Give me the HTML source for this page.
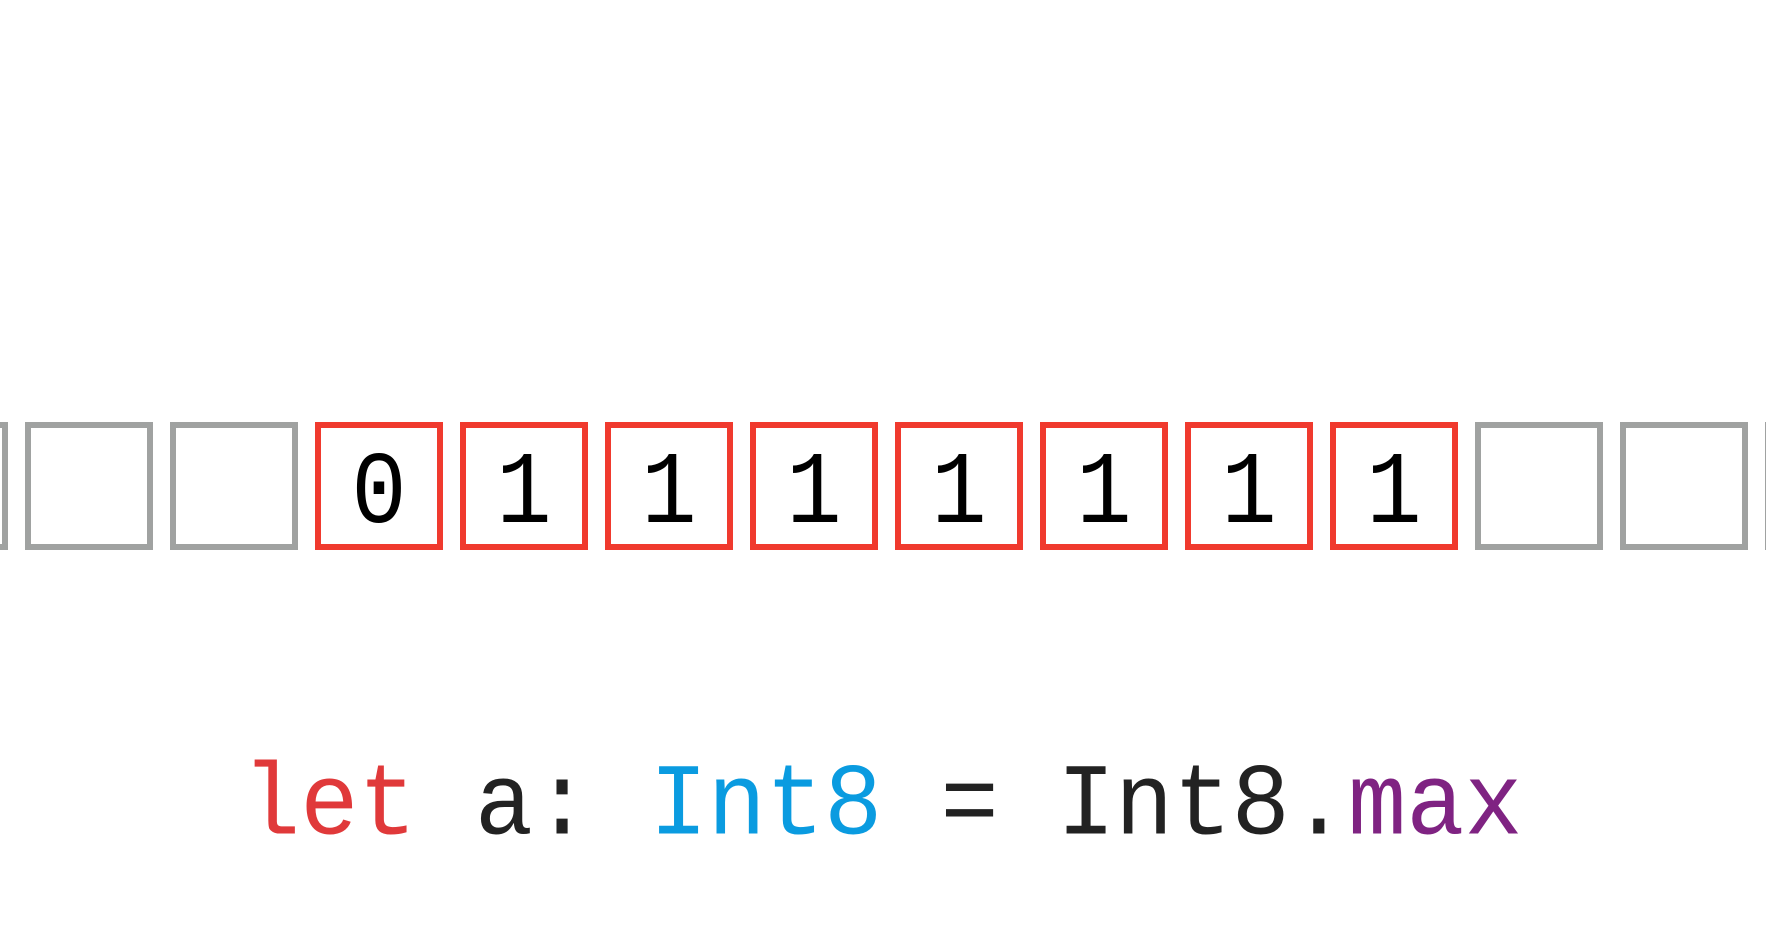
<!DOCTYPE html>
<html><head><style>
html,body{margin:0;padding:0;background:#fff;width:1766px;height:944px;overflow:hidden;position:relative}
.b{position:absolute;top:422px;width:116px;height:116px;border:6px solid #a0a2a1;font-family:"Liberation Mono",monospace;font-size:92px;line-height:134px;text-align:center;color:#000}
.b span{display:inline-block;transform:scaleY(1.12)}
.r{border-color:#f03a2e}
.code{position:absolute;left:242px;top:755px;font-family:"Liberation Mono",monospace;font-size:97px;line-height:110px;white-space:pre;color:#222;transform:scaleY(1.05);transform-origin:left bottom}
</style></head><body>
<div class="b" style="left:-120px"></div>
<div class="b" style="left:25px"></div>
<div class="b" style="left:170px"></div>
<div class="b r" style="left:315px"><span>0</span></div>
<div class="b r" style="left:460px"><span>1</span></div>
<div class="b r" style="left:605px"><span>1</span></div>
<div class="b r" style="left:750px"><span>1</span></div>
<div class="b r" style="left:895px"><span>1</span></div>
<div class="b r" style="left:1040px"><span>1</span></div>
<div class="b r" style="left:1185px"><span>1</span></div>
<div class="b r" style="left:1330px"><span>1</span></div>
<div class="b" style="left:1475px"></div>
<div class="b" style="left:1620px"></div>
<div class="b" style="left:1765px"></div>
<div class="code"><span style="color:#e0393a">let</span> a: <span style="color:#0a9be0">Int8</span> = Int8.<span style="color:#7f2382">max</span></div>
</body></html>
